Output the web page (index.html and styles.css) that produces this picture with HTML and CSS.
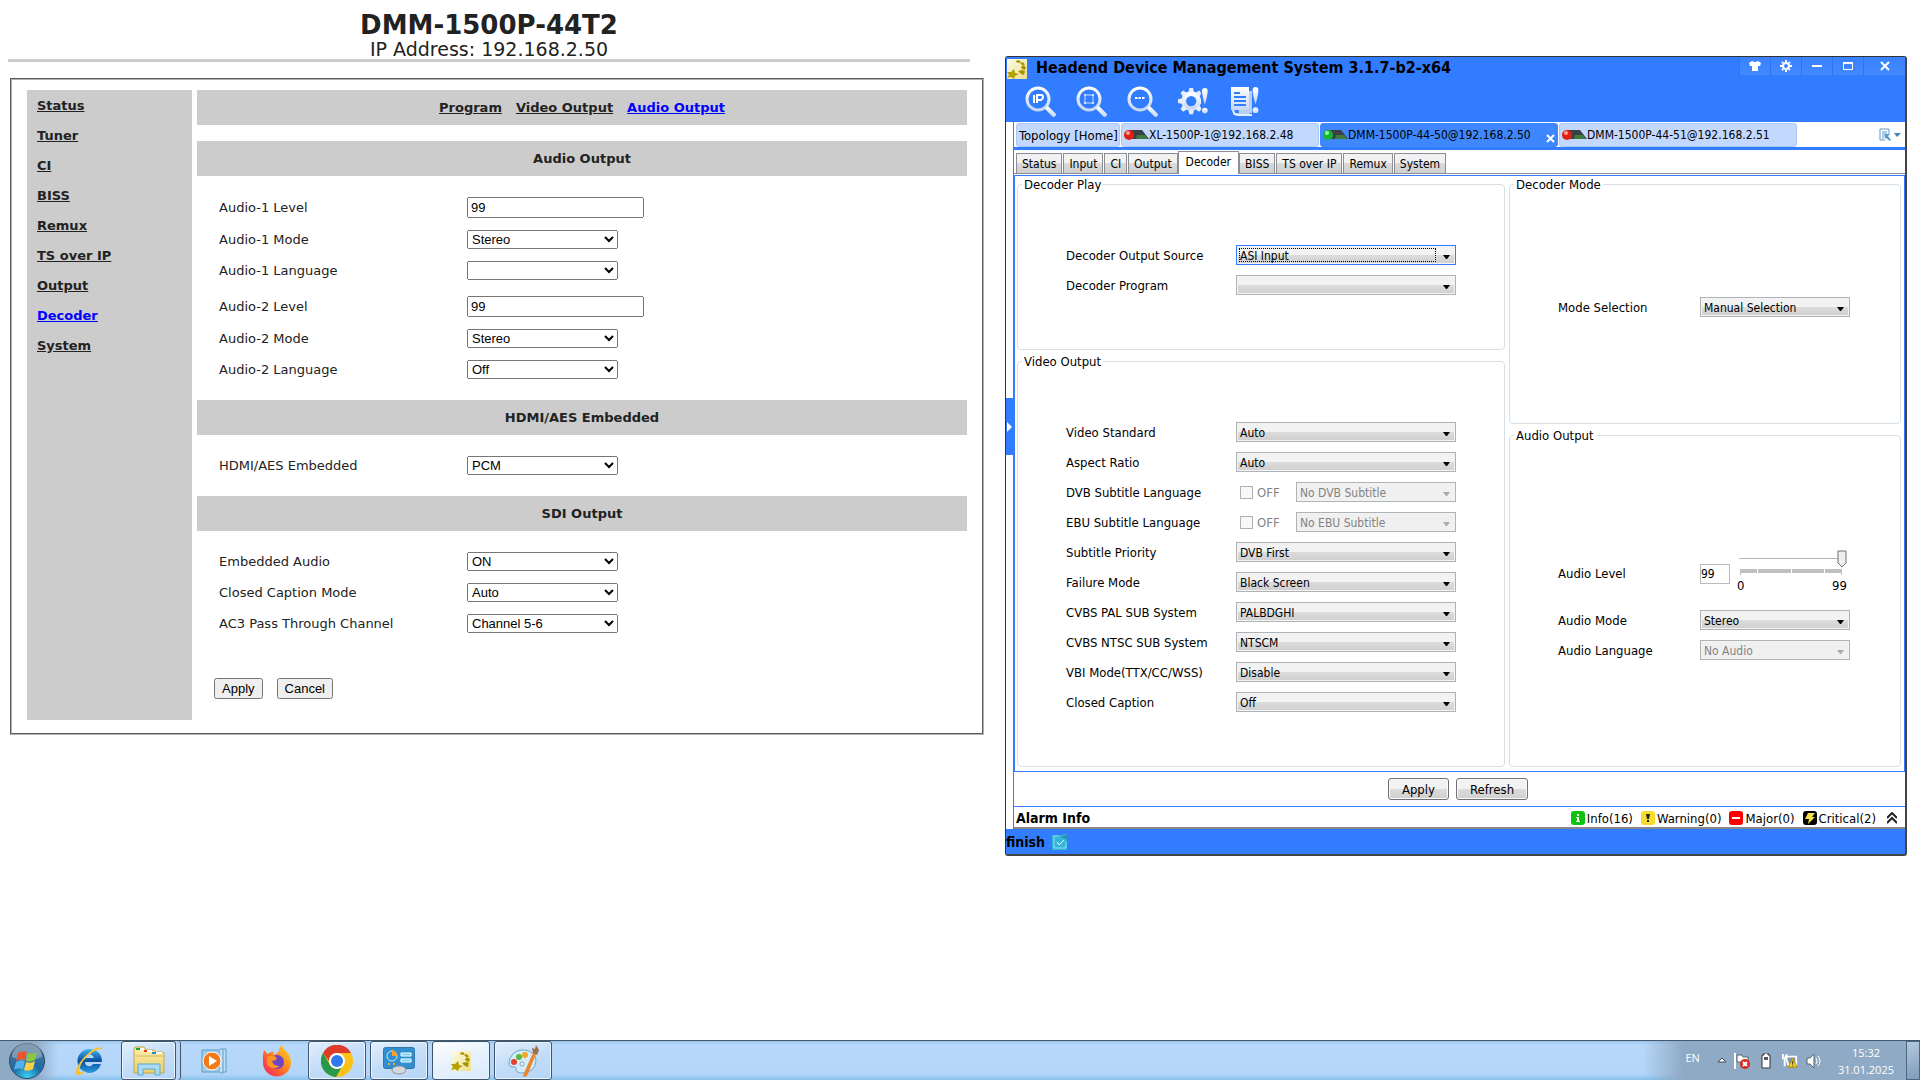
FILE: index.html
```html
<!DOCTYPE html>
<html lang="en">
<head>
  <meta charset="UTF-8">
  <meta name="viewport" content="width=device-width, initial-scale=1.0">
  <title>DMM-1500P-44T2</title>
  <link rel="stylesheet" href="styles.css">
</head>
<body>
  <!-- shared shapes -->
  <svg class="defs" width="0" height="0" aria-hidden="true">
    <defs>
      <linearGradient id="silver" x1="0" y1="0" x2="0" y2="1">
        <stop offset="0" stop-color="#fff"/>
        <stop offset="1" stop-color="#c5d6f2"/>
      </linearGradient>
      <radialGradient id="orb" cx=".5" cy=".95" r=".9">
        <stop offset="0" stop-color="#3fd0f5"/>
        <stop offset=".45" stop-color="#1b6ca8"/>
        <stop offset="1" stop-color="#54748f"/>
      </radialGradient>
      <linearGradient id="ie" x1="0" y1="0" x2="0" y2="1">
        <stop offset="0" stop-color="#3fb4ee"/>
        <stop offset=".5" stop-color="#0c4f9e"/>
        <stop offset="1" stop-color="#2a9be0"/>
      </linearGradient>
      <linearGradient id="folder" x1="0" y1="0" x2="0" y2="1">
        <stop offset="0" stop-color="#fbefb0"/>
        <stop offset="1" stop-color="#e9cf6c"/>
      </linearGradient>
      <linearGradient id="fire" x1="1" y1="0" x2="0" y2="1">
        <stop offset="0" stop-color="#ffe226"/>
        <stop offset=".5" stop-color="#ff7a1f"/>
        <stop offset="1" stop-color="#f0186a"/>
      </linearGradient>
      <linearGradient id="cream" x1="0" y1="0" x2="1" y2="1">
        <stop offset="0" stop-color="#fdfce8"/>
        <stop offset="1" stop-color="#ecdf8a"/>
      </linearGradient>
      <symbol id="lens" viewBox="0 0 32 32">
        <circle cx="13" cy="13" r="11" fill="none" stroke="url(#silver)" stroke-width="3"/>
        <path d="M21 21l2-1 8 8q0 3-3 3l-8-8z" fill="url(#silver)"/>
      </symbol>
      <symbol id="bang" viewBox="0 0 8 30">
        <path d="M1 4Q1 1 4 1T7 4Q7 9 4 19 1 9 1 4z" fill="url(#silver)"/>
        <circle cx="4" cy="25" r="3" fill="url(#silver)"/>
      </symbol>
      <symbol id="stars" viewBox="0 0 20 20">
        <rect width="20" height="20" fill="url(#cream)"/>
        <path d="M0 13l4 0 3-3 1 4 4 1-4 2-1 3-3-2-4 1 2-3z" fill="#b5a200"/>
        <path d="M9 2l3-1 2 2-2 1-3-1zM13 4l3-1 2 3-3 0zM14 8l2-2 3 2-1 3-3-1zM11 12l4-1 3 1-1 4-3-1z" fill="#a89400"/>
      </symbol>
      <symbol id="device" viewBox="0 0 25 11">
        <path d="M5 1h13l7 9H7z" fill="#3a4048"/>
        <path d="M13 6h8l3 4H12z" fill="#3f7a3f"/>
      </symbol>
    </defs>
  </svg>

  <main class="desktop">
    <!-- device web page -->
    <section class="web">
      <header class="web-header">
        <h1>DMM-1500P-44T2</h1>
        <p>IP Address: 192.168.2.50</p>
      </header>

      <div class="web-frame">
        <nav class="side-nav">
          <a href="#">Status</a>
          <a href="#">Tuner</a>
          <a href="#">CI</a>
          <a href="#">BISS</a>
          <a href="#">Remux</a>
          <a href="#">TS over IP</a>
          <a href="#">Output</a>
          <a href="#" class="current">Decoder</a>
          <a href="#">System</a>
        </nav>

        <form class="web-form">
          <nav class="band top-nav">
            <a href="#">Program</a>
            <a href="#">Video Output</a>
            <a href="#" class="current">Audio Output</a>
          </nav>

          <h2 class="band">Audio Output</h2>
          <div class="rows">
            <div class="row"><label for="a1-level">Audio-1 Level</label><input type="text" id="a1-level" value="99"></div>
            <div class="row"><label for="a1-mode">Audio-1 Mode</label><select id="a1-mode"><option>Stereo</option></select></div>
            <div class="row"><label for="a1-lang">Audio-1 Language</label><select id="a1-lang"><option></option></select></div>
          </div>
          <div class="rows second">
            <div class="row"><label for="a2-level">Audio-2 Level</label><input type="text" id="a2-level" value="99"></div>
            <div class="row"><label for="a2-mode">Audio-2 Mode</label><select id="a2-mode"><option>Stereo</option></select></div>
            <div class="row"><label for="a2-lang">Audio-2 Language</label><select id="a2-lang"><option>Off</option></select></div>
          </div>

          <h2 class="band">HDMI/AES Embedded</h2>
          <div class="rows">
            <div class="row"><label for="hdmi">HDMI/AES Embedded</label><select id="hdmi"><option>PCM</option></select></div>
          </div>

          <h2 class="band">SDI Output</h2>
          <div class="rows">
            <div class="row"><label for="emb">Embedded Audio</label><select id="emb"><option>ON</option></select></div>
            <div class="row"><label for="ccm">Closed Caption Mode</label><select id="ccm"><option>Auto</option></select></div>
            <div class="row"><label for="ac3">AC3 Pass Through Channel</label><select id="ac3"><option>Channel 5-6</option></select></div>
          </div>

          <div class="web-buttons">
            <button type="button">Apply</button>
            <button type="button">Cancel</button>
          </div>
        </form>
      </div>
    </section>

    <!-- management application -->
    <section class="app">
      <header class="app-header">
        <div class="title-bar">
          <svg width="20" height="20"><use href="#stars"/></svg>
          <h2>Headend Device Management System 3.1.7-b2-x64</h2>
          <div class="win-buttons">
            <button type="button" aria-label="Skin"><svg width="12" height="10" viewBox="0 0 12 10"><path d="M0 2l3-2q3 2 6 0l3 2-1 3H9v5H3V5H1z" fill="#fff"/></svg></button>
            <button type="button" aria-label="Settings"><svg width="12" height="12" viewBox="0 0 12 12"><circle cx="6" cy="6" r="3" fill="none" stroke="#fff" stroke-width="2"/><path d="M6 0v2M6 10v2M0 6h2M10 6h2M2 2l1 1M9 9l1 1M10 2L9 3M3 9l-1 1" stroke="#fff" stroke-width="2"/></svg></button>
            <button type="button" aria-label="Minimize"><svg width="10" height="10" viewBox="0 0 10 10"><path d="M0 5h10" stroke="#fff" stroke-width="2"/></svg></button>
            <button type="button" aria-label="Maximize"><svg width="10" height="8" viewBox="0 0 10 8"><path d="M.5 0v7.500h9V0M0 1h10" fill="none" stroke="#fff"/><path d="M0 1h10" stroke="#fff" stroke-width="2"/></svg></button>
            <button type="button" class="close" aria-label="Close"><svg width="10" height="10" viewBox="0 0 10 10"><path d="M1 1l8 8M9 1L1 9" stroke="#fff" stroke-width="2"/></svg></button>
          </div>
        </div>
        <div class="tool-bar">
          <button type="button" aria-label="Search by IP"><svg width="32" height="32" viewBox="0 0 32 32"><use href="#lens"/><path d="M9 9v8M12 17V9h4q2 0 2 2t-2 3h-4" fill="none" stroke="#fff" stroke-width="2"/></svg></button>
          <button type="button" aria-label="Search range"><svg width="32" height="32" viewBox="0 0 32 32"><use href="#lens"/><path d="M9 8v10M17 8v10M8 9h10M8 17h10" stroke="#cfe0ff"/><path d="M8 8h2v2H8zM16 8h2v2h-2zM8 16h2v2H8zM16 16h2v2h-2z" fill="#cfe0ff"/></svg></button>
          <button type="button" aria-label="Search"><svg width="32" height="32" viewBox="0 0 32 32"><use href="#lens"/><path d="M8 12h10" stroke="#fff" stroke-width="2" stroke-dasharray="2.500 1"/></svg></button>
          <button type="button" aria-label="Setup alarms"><svg width="32" height="32" viewBox="0 0 34 32"><g transform="translate(14 15)"><circle r="8" fill="none" stroke="url(#silver)" stroke-width="5"/><g fill="#e6eefc"><path id="tooth" d="M-3-9l1-5h4l1 5z"/><use href="#tooth" transform="rotate(45)"/><use href="#tooth" transform="rotate(90)"/><use href="#tooth" transform="rotate(135)"/><use href="#tooth" transform="rotate(180)"/><use href="#tooth" transform="rotate(225)"/><use href="#tooth" transform="rotate(270)"/><use href="#tooth" transform="rotate(315)"/></g></g><path d="M24 0h9v31h-8z" fill="#327dff"/><use href="#bang" x="24" y="0" width="9" height="30"/></svg></button>
          <button type="button" aria-label="Log"><svg width="32" height="32" viewBox="0 0 32 32"><path d="M7 5h16v22H10zM5 27h16v2H4z" fill="#b9cdf2"/><path d="M2 1h18v23H2z" fill="url(#silver)"/><path d="M5 7h6M5 11h12M5 15h12M5 19h12" stroke="#327dff" stroke-width="2"/><path d="M4 24q1 5 5 5h14" fill="none" stroke="#e6eefc" stroke-width="2"/><use href="#bang" x="22" y="0" width="9" height="29"/></svg></button>
        </div>
      </header>

      <div class="app-body">
        <div class="gutter">
          <button type="button" class="expand" aria-label="Expand tree"><svg width="5" height="10" viewBox="0 0 5 10"><path d="M0 0l5 5-5 5z" fill="#fff"/></svg></button>
        </div>

        <div class="work">
          <div class="device-tabs">
            <a href="#" class="home">Topology [Home]</a>
            <a href="#" class="short"><svg width="25" height="12" viewBox="0 0 25 12"><use href="#device" width="25" height="11"/><circle cx="5" cy="6" r="5" fill="#e02010"/><circle cx="4" cy="4" r="2" fill="#ff9c8c"/></svg>XL-1500P-1@192.168.2.48</a>
            <a href="#" class="active"><svg width="25" height="12" viewBox="0 0 25 12"><use href="#device" width="25" height="11"/><circle cx="5" cy="6" r="5" fill="#13b82c"/><circle cx="4" cy="4" r="2" fill="#a5f5ac"/></svg>DMM-1500P-44-50@192.168.2.50<svg class="tab-close" width="9" height="9" viewBox="0 0 9 9"><path d="M1 1l7 7M8 1L1 8" stroke="#fff" stroke-width="2"/></svg></a>
            <a href="#"><svg width="25" height="12" viewBox="0 0 25 12"><use href="#device" width="25" height="11"/><circle cx="5" cy="6" r="5" fill="#e02010"/><circle cx="4" cy="4" r="2" fill="#ff9c8c"/></svg>DMM-1500P-44-51@192.168.2.51</a>
            <button type="button" class="tab-list" aria-label="Tab list"><svg width="22" height="14" viewBox="0 0 22 14"><path d="M10 6V1H1v11h5M3 4h5M3 6h5M3 8h3M3 10h2" fill="none" stroke="#5b9bc8"/><path d="M6 6h5L9 8l3 4-1 1-4-3-1 1z" fill="#5b9bc8"/><path d="M15 5h7l-4 4z" fill="#3f86b8"/></svg></button>
          </div>

          <nav class="page-tabs">
            <a href="#">Status</a>
            <a href="#">Input</a>
            <a href="#">CI</a>
            <a href="#">Output</a>
            <a href="#" class="active">Decoder</a>
            <a href="#">BISS</a>
            <a href="#">TS over IP</a>
            <a href="#">Remux</a>
            <a href="#">System</a>
          </nav>

          <form class="page">
            <div class="column">
              <fieldset class="play">
                <legend>Decoder Play</legend>
                <div class="field"><label for="src">Decoder Output Source</label><span class="focused"><select id="src"><option>ASI Input</option></select></span></div>
                <div class="field"><label for="prog">Decoder Program</label><select id="prog"><option></option></select></div>
              </fieldset>
              <fieldset class="video">
                <legend>Video Output</legend>
                <div class="field"><label for="std">Video Standard</label><select id="std"><option>Auto</option></select></div>
                <div class="field"><label for="ratio">Aspect Ratio</label><select id="ratio"><option>Auto</option></select></div>
                <div class="field"><label for="dvb">DVB Subtitle Language</label><div class="pair"><label class="check"><input type="checkbox" disabled> OFF</label><select id="dvb" disabled><option>No DVB Subtitle</option></select></div></div>
                <div class="field"><label for="ebu">EBU Subtitle Language</label><div class="pair"><label class="check"><input type="checkbox" disabled> OFF</label><select id="ebu" disabled><option>No EBU Subtitle</option></select></div></div>
                <div class="field"><label for="prio">Subtitle Priority</label><select id="prio"><option>DVB First</option></select></div>
                <div class="field"><label for="fail">Failure Mode</label><select id="fail"><option>Black Screen</option></select></div>
                <div class="field"><label for="pal">CVBS PAL SUB System</label><select id="pal"><option>PALBDGHI</option></select></div>
                <div class="field"><label for="ntsc">CVBS NTSC SUB System</label><select id="ntsc"><option>NTSCM</option></select></div>
                <div class="field"><label for="vbi">VBI Mode(TTX/CC/WSS)</label><select id="vbi"><option>Disable</option></select></div>
                <div class="field"><label for="cc">Closed Caption</label><select id="cc"><option>Off</option></select></div>
              </fieldset>
            </div>
            <div class="column">
              <fieldset class="mode">
                <legend>Decoder Mode</legend>
                <div class="field"><label for="sel">Mode Selection</label><select id="sel"><option>Manual Selection</option></select></div>
              </fieldset>
              <fieldset class="audio">
                <legend>Audio Output</legend>
                <div class="field level">
                  <label for="lvl">Audio Level</label>
                  <input type="text" id="lvl" value="99">
                  <div class="slider">
                    <input type="range" min="0" max="99" value="99" aria-label="Audio Level">
                    <div class="ticks"><i></i><i></i><i></i><i></i></div>
                    <div class="ends"><span>0</span><span>99</span></div>
                  </div>
                </div>
                <div class="field"><label for="amode">Audio Mode</label><select id="amode"><option>Stereo</option></select></div>
                <div class="field"><label for="alang">Audio Language</label><select id="alang" disabled><option>No Audio</option></select></div>
              </fieldset>
            </div>
          </form>

          <div class="actions">
            <button type="button">Apply</button>
            <button type="button">Refresh</button>
          </div>

          <div class="alarms">
            <h3>Alarm Info</h3>
            <span class="alarm"><svg width="14" height="14" viewBox="0 0 14 14"><rect width="14" height="14" rx="3" fill="#0bc40b"/><path d="M6 3h2v2H6zM5 6h3v4h1v1H5v-1h1V7H5z" fill="#fff"/></svg>Info(16)</span>
            <span class="alarm"><svg width="14" height="14" viewBox="0 0 14 14"><rect width="14" height="14" rx="3" fill="#f7dc2c"/><path d="M5 3h4L8 8H6zM6 9h2v2H6z" fill="#222"/></svg>Warning(0)</span>
            <span class="alarm"><svg width="14" height="14" viewBox="0 0 14 14"><rect width="14" height="14" rx="3" fill="#f00"/><path d="M3 6h8v2H3z" fill="#fff"/></svg>Major(0)</span>
            <span class="alarm"><svg width="14" height="14" viewBox="0 0 14 14"><rect width="14" height="14" rx="3" fill="#000"/><path d="M5 2h7L9 6h3l-7 7 1-5H2z" fill="#f6e04a"/></svg>Critical(2)</span>
            <button type="button" aria-label="Show alarms"><svg width="10" height="12" viewBox="0 0 10 12"><path d="M0 6l5-5 5 5M0 11l5-5 5 5" fill="none" stroke="#222" stroke-width="2"/></svg></button>
          </div>
        </div>
      </div>

      <footer class="status-bar">
        <strong>finish</strong>
        <svg width="16" height="16" viewBox="0 0 16 16"><path d="M0 1h9l6-1v16H0z" fill="#35b5d8"/><path d="M7 2H2v12h12V8" fill="none" stroke="#8fdcf0"/><path d="M5 8l2 3 5-5" fill="none" stroke="#e8fcff"/><path d="M9 3l7-3v6z" fill="#2a93b0"/></svg>
      </footer>
    </section>
  </main>

  <!-- taskbar -->
  <footer class="taskbar">
    <button type="button" class="start" aria-label="Start"><svg width="38" height="38" viewBox="0 0 38 38"><circle cx="19" cy="19" r="17.500" fill="url(#orb)" stroke="#2b4a68"/><path d="M4 15a15 14 0 0 1 30 0q-15 7-30 0z" fill="#fff" opacity=".3"/><path d="M10 11q4-3 9-1l-2 8q-5-2-9 1z" fill="#e8562a"/><path d="M20 11q5 2 9-1l-2 8q-5 3-9 1z" fill="#8fc640"/><path d="M8 20q4-3 9-1l-2 8q-5-2-9 1z" fill="#55b0ee"/><path d="M18 20q5 2 9-1l-2 8q-5 3-9 1z" fill="#fbd044"/></svg></button>
    <button type="button" aria-label="Internet Explorer"><svg width="32" height="32" viewBox="0 0 32 32"><path d="M16 4a12 12 0 1 0 12 15h-8q-2 3-5 2-3-1-3-4h17Q29 5 16 4zm-4 9q1-4 4-4t5 4z" fill="url(#ie)"/><path d="M30 5Q28-1 18 6 4 17 2 29q4 3 11-3-7 3-7-1Q8 15 20 7q8-5 10-2z" fill="#f7c231"/></svg></button>
    <button type="button" class="open stacked" aria-label="Explorer"><svg width="34" height="32" viewBox="0 0 34 32"><path d="M2 4q0-2 2-2h8l2 3h8l2 2h6q2 0 2 2v19H2z" fill="url(#folder)" stroke="#c5a548"/><path d="M4 3h4v2H4z" fill="#19a52e"/><path d="M8 3h4v2H8z" fill="#fff"/><path d="M12 5h3v2h-3z" fill="#e03a1c"/><path d="M15 5h5v2h-5z" fill="#fff"/><path d="M20 7h4v2h-4z" fill="#2a87d8"/><path d="M24 7h6v2h-6z" fill="#fff"/><path d="M3 11h28" stroke="#d7ba58"/><path d="M6 30V19h22v11h-5v-6H11v6z" fill="#a9dcf3" stroke="#5fa9d0"/></svg></button>
    <button type="button" aria-label="Media Player"><svg width="30" height="28" viewBox="0 0 30 28"><path d="M2 3h18v22H2z" fill="#9fcbe8" stroke="#5d9cc6"/><path d="M20 2h3v24h-3M23 2h3v23h-3" fill="#bfe0f3" stroke="#5d9cc6"/><circle cx="12" cy="14" r="9" fill="#f27a1a" stroke="#fff"/><path d="M9 9l8 5-8 5z" fill="#fff"/></svg></button>
    <button type="button" aria-label="Firefox"><svg width="32" height="32" viewBox="0 0 32 32"><path d="M3 5q2 3 4 4 3-3 6-2l-1 3q4-1 6-4 0-4 3-6 1 4 4 6 5 5 5 11a14 14 0 0 1-28 1Q1 11 3 5z" fill="url(#fire)"/><circle cx="16" cy="17" r="7" fill="#6d45c9"/><path d="M6 12q6-3 10 1-1 3-5 3 1 5 8 5-7 5-13-1z" fill="#ff9326"/></svg></button>
    <button type="button" class="open" aria-label="Chrome"><svg width="32" height="32" viewBox="0 0 32 32"><circle cx="16" cy="16" r="16" fill="#fbc116"/><path d="M2 8A16 16 0 0 1 30 8H16a8 8 0 0 0-8 8z" fill="#dd3b2c"/><path d="M2 8a16 16 0 0 0 13 24l7-12a8 8 0 0 1-13 0z" fill="#269a4a"/><circle cx="16" cy="16" r="8" fill="#fff"/><circle cx="16" cy="16" r="6" fill="#3079e8"/></svg></button>
    <button type="button" class="open" aria-label="Control Panel"><svg width="32" height="28" viewBox="0 0 32 28"><rect x=".5" y=".5" width="31" height="21" rx="2" fill="#2f8fcf" stroke="#3476a8"/><circle cx="9" cy="9" r="5" fill="none" stroke="#cfeaf8"/><path d="M9 9V3a6 6 0 0 1 5 6z" fill="#f9a02c"/><path d="M18 6h10v3H18zM18 12h10v3H18z" fill="#6fd2f2" stroke="#fff"/><path d="M5 17h2M10 17h2" stroke="#f9a02c" stroke-width="2"/><ellipse cx="16" cy="23" rx="7" ry="4" fill="#d5d9dd" stroke="#8a9299"/></svg></button>
    <button type="button" class="open lit" aria-label="Management System"><svg width="20" height="20"><use href="#stars"/></svg></button>
    <button type="button" class="open" aria-label="Paint"><svg width="32" height="32" viewBox="0 0 32 32"><path d="M3 13Q8 4 18 5q11 2 11 11-1 11-13 12-6 0-7-3 1-4-3-3-6 0-3-9z" fill="#d5ecf8" stroke="#6ea6c8"/><circle cx="7" cy="17" r="3" fill="#e2402c"/><circle cx="12" cy="12" r="3" fill="#58b83c"/><circle cx="18" cy="10" r="3" fill="#f5a623"/><circle cx="15" cy="19" r="2" fill="#fff" stroke="#6ea6c8"/><path d="M26 8l3 1-9 22-4 1 1-4z" fill="#e9862c"/><path d="M26 8l-1-5 3 1 1-4 3 5-2 5z" fill="#9a7148"/></svg></button>

    <div class="tray">
      <span class="lang">EN</span>
      <svg width="8" height="5" viewBox="0 0 8 5"><path d="M0 4l4-4 4 4z" fill="#fff" stroke="#445"/></svg>
      <svg width="16" height="16" viewBox="0 0 16 16"><path d="M1 0v16" stroke="#fff" stroke-width="2"/><path d="M3 2h5l1 2h5v7H8L7 9H3z" fill="#fff" stroke="#566"/><circle cx="11" cy="11" r="5" fill="#d8271c"/><path d="M9 9l4 4M13 9l-4 4" stroke="#fff" stroke-width="2"/></svg>
      <svg width="16" height="16" viewBox="-2 0 16 16"><path d="M4 0h4v2h2v13H2V2h2z" fill="#fff" stroke="#333"/><path d="M4 4h4v3H4z" fill="#556"/></svg>
      <svg width="16" height="16" viewBox="0 0 18 16"><path d="M4 3h12v9H7z" fill="#8499ad" stroke="#fff" stroke-width="2"/><path d="M1 0v5h4V0M3 5v9" fill="none" stroke="#fff" stroke-width="2"/><path d="M12 5l5 10H7z" fill="#f8d020" stroke="#a58400"/><path d="M12 8v4M12 13v1" stroke="#222"/></svg>
      <svg width="16" height="16" viewBox="0 0 16 16"><path d="M1 5h3l4-4v14l-4-4H1z" fill="#fff" stroke="#566"/><path d="M10 5q2 3 0 6M12 3q4 5 0 10" fill="none" stroke="#fff"/></svg>
      <div class="clock"><span>15:32</span><span>31.01.2025</span></div>
    </div>
    <button type="button" class="show-desktop" aria-label="Show desktop"></button>
  </footer>
</body>
</html>
```
FILE: styles.css
```css
* {
  box-sizing: border-box;
}

body {
  margin: 0;
  min-height: 100vh;
  display: flex;
  flex-direction: column;
  background: #fff;
  font-family: Tahoma, "DejaVu Sans Condensed", sans-serif;
  font-size: 13px;
  color: #000;
}

h1, h2, h3, p {
  margin: 0;
}

svg {
  display: block;
  flex: none;
}

.defs {
  position: absolute;
}

.desktop {
  flex: 1;
  display: grid;
  grid-template-columns: minmax(0, 984fr) minmax(0, 902fr);
  gap: 21px;
  padding-right: 13px;
  align-items: start;
}

/* ---- device web page ---- */
.web {
  font-family: Verdana, "DejaVu Sans", sans-serif;
  font-size: 13px;
  color: #222;
}

.web a {
  color: #222;
  font-weight: bold;
}

.web a.current {
  color: #00f;
}

.web-header {
  margin: 0 14px 0 8px;
  padding-top: 10px;
  border-bottom: 3px solid #ccc;
  text-align: center;
}

.web-header h1 {
  font-size: 26px;
  line-height: 30px;
}

.web-header p {
  font-size: 19px;
  line-height: 19px;
}

.web-frame {
  display: flex;
  gap: 5px;
  margin: 16px 0 0 10px;
  padding: 10px 15px 13px 15px;
  border: 2px groove #b0b0b0;
}

.side-nav {
  width: 165px;
  padding: 1px 10px;
  background: #ccc;
  display: flex;
  flex-direction: column;
  align-items: flex-start;
}

.side-nav a {
  line-height: 30px;
}

.web-form {
  flex: 1;
  padding-bottom: 21px;
}

.band {
  height: 35px;
  display: flex;
  align-items: center;
  justify-content: center;
  background: #ccc;
  font-size: 13px;
}

.top-nav {
  gap: 14px;
  margin-bottom: 16px;
}

.rows {
  padding: 15px 0 15px 22px;
}

.rows:has(+ .second) {
  padding-bottom: 4px;
}

.rows.second {
  padding-top: 0;
}

.row {
  display: flex;
  align-items: center;
  padding: 6px 0;
}

.row label {
  width: 248px;
}

.row input,
.row select,
.web-buttons button {
  font-family: Arial, "Liberation Sans", sans-serif;
  font-size: 13px;
}

.row input {
  width: 177px;
  height: 21px;
}

.row select {
  width: 151px;
  height: 19px;
}

.web-buttons {
  display: flex;
  gap: 14px;
  padding: 24px 0 0 17px;
}

.web-buttons button {
  height: 21px;
  padding: 1px 6px;
}

/* ---- management application ---- */
.app {
  margin-top: 56px;
  border: 1px solid #333;
  border-right: 2px solid #444;
  border-bottom: 2px solid #444;
  border-radius: 3px;
}

.app button {
  font-family: inherit;
  font-size: 13px;
}

.app a {
  color: #000;
  text-decoration: none;
}

.app-header {
  background: #327dff;
  height: 65px;
}

.title-bar {
  display: flex;
  align-items: flex-start;
  height: 26px;
  padding-left: 1px;
}

.title-bar > svg {
  margin-top: 2px;
}

.title-bar h2 {
  flex: 1;
  padding-left: 9px;
  font-size: 16px;
  line-height: 21px;
  white-space: nowrap;
}

.win-buttons {
  display: flex;
}

.win-buttons button {
  display: flex;
  align-items: center;
  justify-content: center;
  width: 31px;
  height: 18px;
  padding: 0;
  border: 0;
  border-left: 1px solid #2f74ee;
  background: linear-gradient(#3a82ff, #4389ff);
}

.win-buttons .close {
  width: 42px;
}

.tool-bar {
  display: flex;
  gap: 19px;
  padding: 3px 0 0 19px;
}

.tool-bar button {
  padding: 0;
  border: 0;
  background: none;
}

.app-body {
  display: flex;
  background: #fff;
}

.gutter {
  width: 7px;
}

.expand {
  display: flex;
  align-items: center;
  justify-content: center;
  width: 7px;
  height: 57px;
  margin-top: 276px;
  padding: 0;
  border: 0;
  background: #327dff;
}

.work {
  flex: 1;
  min-width: 0;
  border-left: 1px solid #327dff;
}

.device-tabs {
  display: flex;
  gap: 1px;
  height: 28px;
  padding: 1px 4px 0 2px;
  border-bottom: 3px solid #327dff;
}

.device-tabs a {
  display: flex;
  align-items: center;
  width: 238px;
  height: 24px;
  padding-left: 2px;
  font-size: 12px;
  background: #c2d8ff;
  border: 1px solid #a8c8f8;
  border-radius: 3px;
  white-space: nowrap;
}

.device-tabs .home {
  width: 104px;
  font-size: 13px;
}

.device-tabs .short {
  width: 198px;
}

.device-tabs a.active {
  background: #3f87ff;
  border-color: #3f87ff;
}

.tab-close {
  margin: 6px 2px 0 auto;
}

.tab-list {
  margin-left: auto;
  padding: 0;
  border: 0;
  background: none;
}

.page-tabs {
  display: flex;
  align-items: flex-end;
  height: 24px;
  padding-left: 2px;
  border-bottom: 1px solid #8c8e94;
}

.page-tabs a {
  height: 20px;
  padding: 0 5px;
  font-size: 12px;
  line-height: 21px;
  border: 1px solid #8c8e94;
  border-bottom: 0;
  margin-right: 1px;
  background: linear-gradient(#f2f2f2 50%, #dadada 50%, #cfcfcf);
}

.page-tabs a.active {
  height: 23px;
  padding: 0 7px;
  margin: 0 0 -1px -1px;
  background: #fff;
}

.page {
  display: grid;
  grid-template-columns: minmax(0, 488fr) minmax(0, 392fr);
  gap: 4px;
  margin-top: 1px;
  padding: 0 3px 4px 2px;
  border: 1px solid #327dff;
}

.column {
  display: flex;
  flex-direction: column;
  gap: 3px;
}

fieldset {
  min-width: 0;
  margin: 0;
  border: 1px solid #d5dfe5;
  border-radius: 4px;
}

legend {
  margin-left: 4px;
  padding: 0 2px;
  line-height: 17px;
}

.play {
  padding: 52px 0 54px;
}

.video {
  padding: 52px 0 54px;
}

.mode {
  padding: 104px 0 106px;
}

.audio {
  padding: 108px 0 106px;
}

.field {
  display: flex;
  align-items: center;
  height: 20px;
  padding-left: 48px;
}

.field + .field {
  margin-top: 10px;
}

.field > label {
  width: 170px;
  white-space: nowrap;
}

.audio .field > label,
.mode .field > label {
  width: 142px;
}

.field select {
  appearance: none;
  width: 220px;
  height: 20px;
  padding: 1px 3px 0;
  border: 1px solid #adb2b5;
  border-radius: 0;
  box-shadow: inset 0 0 0 1px #f4f4f4;
  font-family: inherit;
  font-size: 12px;
  color: #000;
  background:
    url("data:image/svg+xml,%3Csvg xmlns='http://www.w3.org/2000/svg' width='7' height='4'%3E%3Cpath d='M0 0h7L4 4H3z'/%3E%3C/svg%3E") right 5px top 9px no-repeat,
    linear-gradient(#f2f2f2 50%, #dcdcdc 50%, #cfcfcf);
}

.field select:disabled {
  color: #838383;
  opacity: 1;
  background:
    url("data:image/svg+xml,%3Csvg xmlns='http://www.w3.org/2000/svg' width='7' height='4'%3E%3Cpath d='M0 0h7L4 4H3z' fill='%23aaa'/%3E%3C/svg%3E") right 5px top 9px no-repeat,
    #f0f0f0;
}

.mode .field select,
.audio .field select {
  width: 150px;
}

/* dotted focus ring inside the combo box */
.focused {
  position: relative;
}

.focused select {
  display: block;
  border-color: #327dff;
}

.focused::after {
  content: "";
  position: absolute;
  inset: 3px 20px 3px 3px;
  border: 1px dotted #000;
  pointer-events: none;
}

.pair {
  display: flex;
  align-items: center;
  width: 220px;
  padding-left: 4px;
}

.pair select {
  flex: 1;
  min-width: 0;
  width: auto;
}

.check {
  display: flex;
  align-items: center;
  gap: 4px;
  width: 56px;
  color: #838383;
}

.check input {
  appearance: none;
  width: 13px;
  height: 13px;
  margin: 0;
  border: 1px solid #b1b1b1;
  background: #f8f8f8;
}

.level {
  height: 43px;
}

.level > input {
  width: 30px;
  height: 20px;
  padding: 0;
  border: 1px solid #bbb;
  font-family: inherit;
  font-size: 12px;
}

.level + .field {
  margin-top: 15px;
}

.slider {
  width: 112px;
  margin-left: 5px;
}

.slider input {
  appearance: none;
  display: block;
  width: 112px;
  height: 18px;
  margin: 0;
  background: linear-gradient(#b5b5b5, #b5b5b5) 4px 8px / 104px 1px no-repeat;
}

.slider input::-webkit-slider-thumb {
  appearance: none;
  width: 10px;
  height: 18px;
  background: url("data:image/svg+xml,%3Csvg xmlns='http://www.w3.org/2000/svg' width='10' height='18'%3E%3Cpath d='M1 1h8v12l-4 4-4-4z' fill='%23efefef' stroke='%23707070' stroke-linejoin='round'/%3E%3C/svg%3E") no-repeat;
}

.ticks {
  display: grid;
  grid-template-columns: 1fr 2fr 2fr 1fr;
  gap: 1px;
  height: 6px;
  margin: 1px 5px 0;
  border: solid #c0c0c0;
  border-width: 0 1px;
}

.ticks i {
  height: 4px;
  background: #c0c0c0;
}

.ends {
  display: flex;
  justify-content: space-between;
  padding-left: 2px;
  line-height: 22px;
}

.actions {
  display: flex;
  justify-content: center;
  gap: 7px;
  height: 34px;
  padding: 6px 3px 0 0;
}

.actions button {
  height: 22px;
  min-width: 61px;
  padding: 0 13px;
  border: 1px solid #707070;
  border-radius: 3px;
  background: linear-gradient(#f2f2f2 50%, #dcdcdc 50%, #cfcfcf);
  box-shadow: inset 0 0 0 1px #fafafa;
}

.alarms {
  display: flex;
  align-items: center;
  height: 23px;
  padding: 2px 8px 0 2px;
  border-top: 1px solid #327dff;
  border-bottom: 2px solid #888;
}

.alarms h3 {
  flex: 1;
  font-size: 14px;
}

.alarm {
  display: flex;
  align-items: center;
  gap: 2px;
  margin-right: 8px;
}

.alarms button {
  margin-left: 3px;
  padding: 0;
  border: 0;
  background: none;
}

.status-bar {
  display: flex;
  align-items: center;
  gap: 7px;
  height: 25px;
  background: #327dff;
}

.status-bar strong {
  font-size: 14px;
}

/* ---- taskbar ---- */
.taskbar {
  display: flex;
  height: 40px;
  border-top: 1px solid #44586c;
  background: linear-gradient(#9cc6ee, #b7d8fa 10%, #b3d5f8 85%, #86c2ec);
}

.taskbar button {
  display: flex;
  align-items: center;
  justify-content: center;
  width: 62px;
  padding: 0;
  border: 0;
  background: none;
}

.taskbar .start {
  width: 58px;
  padding-right: 4px;
  background: linear-gradient(90deg, #8faac5 60%, transparent);
}

.taskbar .open {
  width: 58px;
  margin-right: 4px;
  border: 1px solid #3f566e;
  border-radius: 3px;
  background: linear-gradient(160deg, #e3effc, #c3ddf8 50%, #b5d5f6);
  box-shadow: inset 0 0 0 1px #e8f4ff;
}

.taskbar .stacked {
  width: 55px;
  margin-left: 1px;
  margin-right: 8px;
  box-shadow: inset 0 0 0 1px #e8f4ff, 4px 0 0 #b7d5f2, 5px 0 0 #3f566e;
}

.taskbar .lit {
  background: linear-gradient(160deg, #fff, #e6f1fd 50%, #d9eafb);
}

.tray {
  flex: none;
  display: flex;
  align-items: center;
  gap: 8px;
  margin-left: auto;
  padding: 0 12px 0 42px;
  color: #fff;
  font-family: "Segoe UI", "Open Sans", sans-serif;
  font-size: 11px;
  background: linear-gradient(90deg, transparent, #8faac5 40px);
}

.lang {
  margin: 0 10px 6px 0;
}

.clock {
  display: flex;
  flex-direction: column;
  align-items: center;
  margin-left: 8px;
  line-height: 17px;
}

.taskbar .show-desktop {
  width: 14px;
  border: 1px solid #4c6782;
  background: linear-gradient(160deg, #b5c8dc, #7f9cba);
}
```
